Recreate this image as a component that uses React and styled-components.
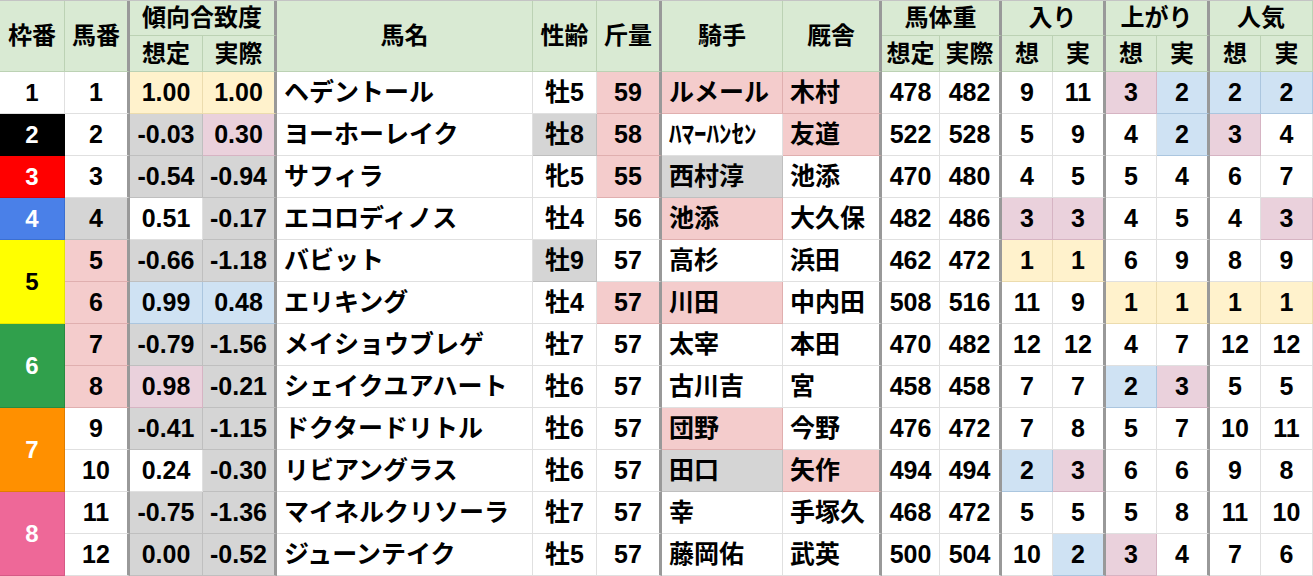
import styled, { createGlobalStyle } from "styled-components";

const GlobalStyle = createGlobalStyle`
  body {
    margin: 0;
    background: #fff;
  }
`;

const COLS = [65, 65, 73, 74, 256, 64, 65, 121, 99, 58, 62, 51, 53, 51, 53, 51, 52];
const THICK_COLS = [1, 3, 6, 8, 10, 12, 14];
const LEFT_COLS = [4, 7, 8];

const TONES = {
  w: { bg: "#ffffff", line: "#e0e0e0" },
  y: { bg: "#fff2cc", line: "#ecdcae" },
  p: { bg: "#ead1dc", line: "#d6b4c3" },
  r: { bg: "#f4cccc", line: "#e0afaf" },
  b: { bg: "#cfe2f3", line: "#abc6df" },
  g: { bg: "#d5d5d5", line: "#bfbfbf" },
};

const FRAMES = {
  1: { bg: "#ffffff", color: "#000", line: "#e0e0e0" },
  2: { bg: "#000000", color: "#fff", line: "#000" },
  3: { bg: "#ff0000", color: "#fff", line: "#e00000" },
  4: { bg: "#4a80e8", color: "#fff", line: "#3c6fd0" },
  5: { bg: "#ffff00", color: "#000", line: "#e6e600" },
  6: { bg: "#30a04c", color: "#fff", line: "#288a40" },
  7: { bg: "#ff9000", color: "#fff", line: "#e07d00" },
  8: { bg: "#ee6898", color: "#fff", line: "#d65a86" },
};

const rows = [
  [{ n: 1, span: 1 }, "1", "1.00:y", "1.00:y", "ヘデントール", "牡5", "59:r", "ルメール:r", "木村:r", "478", "482", "9", "11", "3:p", "2:b", "2:b", "2:b"],
  [{ n: 2, span: 1 }, "2", "-0.03:g", "0.30:p", "ヨーホーレイク", "牡8:g", "58:r", "ﾊﾏｰﾊﾝｾﾝ", "友道:r", "522", "528", "5", "9", "4", "2:b", "3:p", "4"],
  [{ n: 3, span: 1 }, "3", "-0.54:g", "-0.94:g", "サフィラ", "牝5", "55:r", "西村淳:g", "池添", "470", "480", "4", "5", "5", "4", "6", "7"],
  [{ n: 4, span: 1 }, "4:g", "0.51", "-0.17:g", "エコロディノス", "牡4", "56", "池添:r", "大久保", "482", "486", "3:p", "3:p", "4", "5", "4", "3:p"],
  [{ n: 5, span: 2 }, "5:r", "-0.66:g", "-1.18:g", "バビット", "牡9:g", "57", "高杉", "浜田", "462", "472", "1:y", "1:y", "6", "9", "8", "9"],
  [null, "6:r", "0.99:b", "0.48:b", "エリキング", "牡4", "57:r", "川田:r", "中内田", "508", "516", "11", "9", "1:y", "1:y", "1:y", "1:y"],
  [{ n: 6, span: 2 }, "7:r", "-0.79:g", "-1.56:g", "メイショウブレゲ", "牡7", "57", "太宰", "本田", "470", "482", "12", "12", "4", "7", "12", "12"],
  [null, "8:r", "0.98:p", "-0.21:g", "シェイクユアハート", "牡6", "57", "古川吉", "宮", "458", "458", "7", "7", "2:b", "3:p", "5", "5"],
  [{ n: 7, span: 2 }, "9", "-0.41:g", "-1.15:g", "ドクタードリトル", "牡6", "57", "団野:r", "今野", "476", "472", "7", "8", "5", "7", "10", "11"],
  [null, "10", "0.24", "-0.30:g", "リビアングラス", "牡6", "57", "田口:g", "矢作:r", "494", "494", "2:b", "3:p", "6", "6", "9", "8"],
  [{ n: 8, span: 2 }, "11", "-0.75:g", "-1.36:g", "マイネルクリソーラ", "牡7", "57", "幸", "手塚久", "468", "472", "5", "5", "5", "8", "11", "10"],
  [null, "12", "0.00:g", "-0.52:g", "ジューンテイク", "牡5", "57", "藤岡佑", "武英", "500", "504", "10", "2:b", "3:p", "4", "7", "6"],
];

const headTop = [
  { t: "枠番", rs: 2 },
  { t: "馬番", rs: 2, thick: true },
  { t: "傾向合致度", cs: 2, thick: true },
  { t: "馬名", rs: 2 },
  { t: "性齢", rs: 2 },
  { t: "斤量", rs: 2, thick: true },
  { t: "騎手", rs: 2 },
  { t: "厩舎", rs: 2, thick: true },
  { t: "馬体重", cs: 2, thick: true },
  { t: "入り", cs: 2, thick: true },
  { t: "上がり", cs: 2, thick: true },
  { t: "人気", cs: 2 },
];

const headSub = [
  { t: "想定" },
  { t: "実際", thick: true },
  { t: "想定" },
  { t: "実際", thick: true },
  { t: "想" },
  { t: "実", thick: true },
  { t: "想" },
  { t: "実", thick: true },
  { t: "想" },
  { t: "実" },
];

const Sheet = styled.div`
  display: grid;
  grid-template-columns: ${COLS.map((w) => w + "px").join(" ")};
  grid-template-rows: 35px 36px repeat(12, 42px);
  width: 1313px;
  border-top: 1px solid #c4c4c4;
  font-family: "Liberation Sans", "Noto Sans CJK JP", sans-serif;
  font-weight: bold;
  line-height: 1;
  color: #000;
`;

const HeadCell = styled.div`
  grid-row: span ${(p) => p.$rs || 1};
  grid-column: span ${(p) => p.$cs || 1};
  display: flex;
  align-items: center;
  justify-content: center;
  box-sizing: border-box;
  background: #d9ead3;
  border-right: ${(p) => (p.$thick ? "3px solid #999" : "1px solid #bcd2b4")};
  border-bottom: 1px solid #bcd2b4;
  font-size: 24px;
  white-space: nowrap;
`;

const Cell = styled.div`
  display: flex;
  align-items: center;
  justify-content: ${(p) => (p.$left ? "flex-start" : "center")};
  padding-left: ${(p) => (p.$left ? "7px" : "0")};
  box-sizing: border-box;
  background: ${(p) => p.$tone.bg};
  border-right: ${(p) => (p.$thick ? "3px solid #999" : `1px solid ${p.$tone.line}`)};
  border-bottom: 1px solid ${(p) => p.$tone.line};
  font-size: 25px;
  white-space: nowrap;
  overflow: hidden;
`;

const FrameCell = styled.div`
  grid-row: span ${(p) => p.$span};
  display: flex;
  align-items: center;
  justify-content: center;
  box-sizing: border-box;
  background: ${(p) => p.$frame.bg};
  color: ${(p) => p.$frame.color};
  border-right: 1px solid ${(p) => p.$frame.line};
  border-bottom: 1px solid ${(p) => p.$frame.line};
  font-size: 24px;
`;

function parse(v) {
  const [text, tone] = v.split(":");
  return { text, tone: TONES[tone || "w"] };
}

function App() {
  return (
    <>
      <GlobalStyle />
      <Sheet>
        {headTop.map((h) => (
          <HeadCell key={h.t} $rs={h.rs} $cs={h.cs} $thick={h.thick}>
            {h.t}
          </HeadCell>
        ))}
        {headSub.map((h, i) => (
          <HeadCell key={"s" + i} $thick={h.thick}>
            {h.t}
          </HeadCell>
        ))}
        {rows.map((row, r) =>
          row.map((v, c) => {
            if (c === 0) {
              if (!v) return null;
              return (
                <FrameCell key={r + "-f"} $span={v.span} $frame={FRAMES[v.n]}>
                  {v.n}
                </FrameCell>
              );
            }
            const { text, tone } = parse(v);
            return (
              <Cell
                key={r + "-" + c}
                $tone={tone}
                $thick={THICK_COLS.includes(c)}
                $left={LEFT_COLS.includes(c)}
              >
                {text}
              </Cell>
            );
          })
        )}
      </Sheet>
    </>
  );
}

export default App;
